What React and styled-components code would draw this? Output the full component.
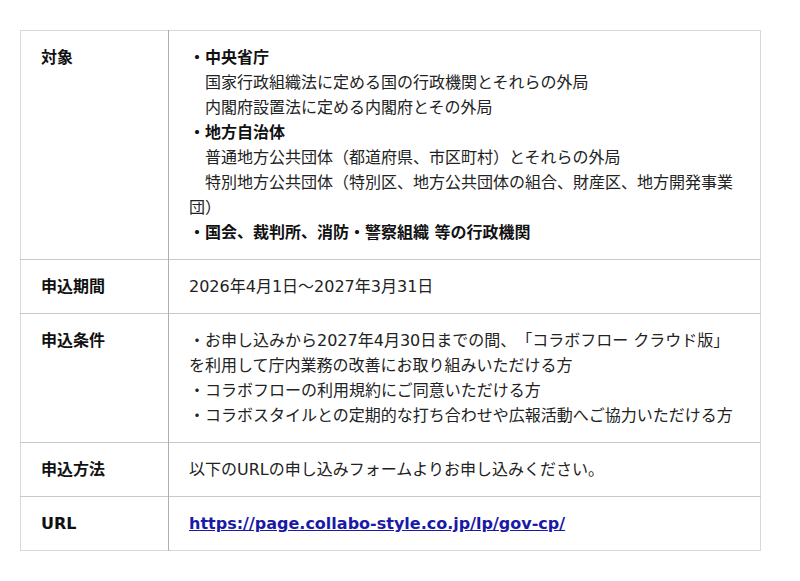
import styled, { createGlobalStyle } from "styled-components";

const GlobalStyle = createGlobalStyle`
  body {
    margin: 0;
    background: #fff;
    font-family: "DejaVu Sans", "Noto Sans CJK JP", sans-serif;
    color: #222;
  }
`;

const Page = styled.div`
  padding: 30px 20px;
`;

const Table = styled.table`
  width: 741px;
  border-collapse: collapse;
  border: 1px solid #d8d8d8;
  font-size: 16px;
  line-height: 25px;
  text-spacing-trim: space-all;
`;

const Row = styled.tr`
  border-bottom: 1px solid #c8c8c8;
  &:last-child {
    border-bottom: 1px solid #d8d8d8;
  }
`;

const Label = styled.th`
  width: 107px;
  padding: 14px 20px;
  text-align: left;
  vertical-align: top;
  font-weight: bold;
  color: #111;
  border-right: 1px solid #b0b0b0;
`;

const Cell = styled.td`
  padding: 14px 20px;
  vertical-align: top;
  color: #222;
`;

const Line = styled.div`
  font-weight: ${(p) => (p.$bold ? "bold" : "normal")};
  color: ${(p) => (p.$bold ? "#111" : "#222")};
`;

const Link = styled.a`
  color: #1a1aa6;
  font-weight: bold;
  text-decoration: underline;
`;

const rows = [
  {
    label: "対象",
    lines: [
      { text: "・中央省庁", bold: true },
      { text: "国家行政組織法に定める国の行政機関とそれらの外局", indent: true },
      { text: "内閣府設置法に定める内閣府とその外局", indent: true },
      { text: "・地方自治体", bold: true },
      { text: "普通地方公共団体（都道府県、市区町村）とそれらの外局", indent: true },
      { text: "特別地方公共団体（特別区、地方公共団体の組合、財産区、地方開発事業団）", indent: true },
      { text: "・国会、裁判所、消防・警察組織 等の行政機関", bold: true },
    ],
  },
  {
    label: "申込期間",
    lines: [{ text: "2026年4月1日～2027年3月31日" }],
  },
  {
    label: "申込条件",
    lines: [
      { text: "・お申し込みから2027年4月30日までの間、「コラボフロー クラウド版」を利用して庁内業務の改善にお取り組みいただける方" },
      { text: "・コラボフローの利用規約にご同意いただける方" },
      { text: "・コラボスタイルとの定期的な打ち合わせや広報活動へご協力いただける方" },
    ],
  },
  {
    label: "申込方法",
    lines: [{ text: "以下のURLの申し込みフォームよりお申し込みください。" }],
  },
];

const App = () => {
  return (
    <Page>
      <GlobalStyle />
      <Table>
        <tbody>
          {rows.map((row) => (
            <Row key={row.label}>
              <Label>{row.label}</Label>
              <Cell>
                {row.lines.map((l, i) => (
                  <Line key={i} $bold={l.bold}>
                    {l.indent ? "　" + l.text : l.text}
                  </Line>
                ))}
              </Cell>
            </Row>
          ))}
          <Row>
            <Label>URL</Label>
            <Cell>
              <Link href="#">https://page.collabo-style.co.jp/lp/gov-cp/</Link>
            </Cell>
          </Row>
        </tbody>
      </Table>
    </Page>
  );
};

export default App;
